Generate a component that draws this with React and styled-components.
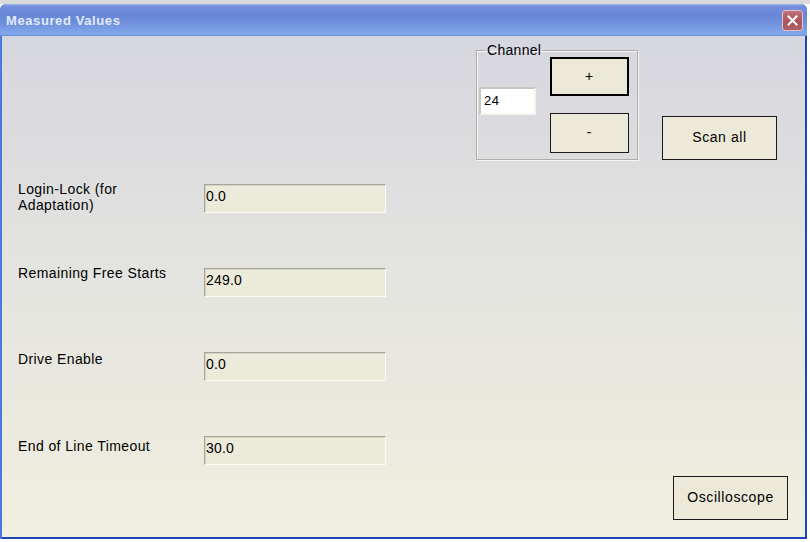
import React from "react";
import styled, { createGlobalStyle } from "styled-components";

const Global = createGlobalStyle`
  html, body { margin: 0; padding: 0; }
  body {
    width: 810px;
    height: 542px;
    overflow: hidden;
    background: linear-gradient(180deg, #dadada 0 4px, #ffffff 4px);
    font-family: "Liberation Sans", Arial, sans-serif;
  }
`;

const Desktop = styled.div`
  padding-top: 4px;
  width: 810px;
  height: 538px;
`;

const Window = styled.div`
  width: 807px;
  height: 535px;
  box-sizing: border-box;
  display: flex;
  flex-direction: column;
  border-radius: 6px 6px 0 0;
  overflow: hidden;
  background: #1d45b5;
`;

const TitleBar = styled.div`
  height: 32px;
  flex: none;
  display: flex;
  align-items: center;
  justify-content: space-between;
  padding: 0 4px 0 6px;
  background: linear-gradient(
    180deg,
    #9fb8ee 0,
    #7490dc 2px,
    #6886d8 10px,
    #6e8edb 18px,
    #7a9fe5 26px,
    #82a8ea 30px,
    #6c90da 32px
  );
`;

const Title = styled.span`
  font-family: "Liberation Sans", Arial, sans-serif;
  font-weight: bold;
  font-size: 13px;
  color: #e2eaf9;
  letter-spacing: 0.6px;
  padding-top: 1px;
`;

const CloseButton = styled.div`
  width: 21px;
  height: 21px;
  box-sizing: border-box;
  border-radius: 3px;
  border: 1px solid #e3c3c8;
  background: linear-gradient(180deg, #c07078 0, #a8545c 60%, #b0606a 100%);
  display: flex;
  align-items: center;
  justify-content: center;
`;

const Frame = styled.div`
  flex: 1;
  display: flex;
  padding: 0 2px 2px 2px;
  background: linear-gradient(90deg, #4a78dc 0 2px, #1d45b5 2px);
`;

const Client = styled.div`
  flex: 1;
  display: flex;
  flex-direction: column;
  background: linear-gradient(180deg, #d6d6de 0%, #e3e3e0 45%, #f1efdf 100%);
  font-family: "Liberation Sans", Arial, sans-serif;
  font-size: 14px;
  color: #000;
`;

const TopRow = styled.div`
  display: flex;
  align-items: flex-end;
  gap: 24px;
  padding: 6px 0 0 474px;
`;

const GroupBox = styled.fieldset`
  margin: 0;
  width: 162px;
  height: 118px;
  box-sizing: border-box;
  padding: 0 8px 6px 3px;
  border: 1px solid #aeada6;
  box-shadow: inset 1px 1px 0 #f6f6f6, 1px 1px 0 #f6f6f6;
  display: flex;
  align-items: flex-start;
  justify-content: space-between;
`;

const Legend = styled.legend`
  margin-left: 6px;
  padding: 0 1px;
  font-size: 14px;
  line-height: 16px;
  letter-spacing: 0.3px;
  color: #000;
`;

const ChannelInput = styled.div`
  width: 57px;
  height: 28px;
  box-sizing: border-box;
  margin-top: 29px;
  margin-left: -1px;
  background: #fff;
  border: 2px solid;
  border-color: #c9c8c0 #f4f4ee #f4f4ee #c9c8c0;
  padding: 4px 0 0 3px;
  font-size: 13px;
  line-height: 16px;
  letter-spacing: 0.6px;
`;

const ButtonColumn = styled.div`
  display: flex;
  flex-direction: column;
  gap: 17px;
  margin-top: -1px;
`;

const Button = styled.div`
  width: ${(p) => p.$w || 79}px;
  height: ${(p) => p.$h || 40}px;
  box-sizing: border-box;
  background: #ece9d8;
  border: ${(p) => (p.$default ? "2px solid #000" : "1px solid #1a1a1a")};
  display: flex;
  align-items: center;
  justify-content: center;
  font-size: 14px;
  letter-spacing: 0.6px;
  color: #000;
  padding-bottom: 2px;
`;

const Fields = styled.div`
  display: flex;
  flex-direction: column;
  gap: 55px;
  margin-top: 24px;
  padding-left: 16px;
`;

const FieldRow = styled.div`
  display: grid;
  grid-template-columns: 186px 182px;
  align-items: start;
`;

const Label = styled.div`
  margin-top: ${(p) => p.$dy}px;
  line-height: 16px;
  letter-spacing: 0.4px;
  white-space: ${(p) => (p.$wrap ? "normal" : "nowrap")};
  width: 125px;
`;

const ValueBox = styled.div`
  height: 29px;
  box-sizing: border-box;
  background: #ecead9;
  border: 1px solid;
  border-color: #a6a59c #fbfbf6 #fbfbf6 #a6a59c;
  box-shadow: inset 1px 1px 0 #d6d4c6;
  padding: 3px 0 0 1px;
  line-height: 16px;
  font-size: 14px;
  letter-spacing: 0.2px;
`;

const BottomRow = styled.div`
  display: flex;
  justify-content: flex-end;
  padding: 11px 17px 0 0;
`;

const rows = [
  { label: "Login-Lock (for Adaptation)", value: "0.0", dy: -3, wrap: true },
  { label: "Remaining Free Starts", value: "249.0", dy: -3 },
  { label: "Drive Enable", value: "0.0", dy: -1 },
  { label: "End of Line Timeout", value: "30.0", dy: 2 },
];

export default function App() {
  return (
    <>
      <Global />
      <Desktop>
        <Window>
          <TitleBar>
            <Title>Measured Values</Title>
            <CloseButton>
              <svg width="11" height="11" viewBox="0 0 11 11">
                <path
                  d="M1.5 1.5 L9.5 9.5 M9.5 1.5 L1.5 9.5"
                  stroke="#fff"
                  strokeWidth="2"
                  strokeLinecap="square"
                />
              </svg>
            </CloseButton>
          </TitleBar>
          <Frame>
            <Client>
              <TopRow>
                <GroupBox>
                  <Legend>Channel</Legend>
                  <ChannelInput>24</ChannelInput>
                  <ButtonColumn>
                    <Button $default $h={39}>+</Button>
                    <Button $h={40}>-</Button>
                  </ButtonColumn>
                </GroupBox>
                <Button $w={115} $h={44}>Scan all</Button>
              </TopRow>
              <Fields>
                {rows.map((r) => (
                  <FieldRow key={r.label}>
                    <Label $dy={r.dy} $wrap={r.wrap}>{r.label}</Label>
                    <ValueBox>{r.value}</ValueBox>
                  </FieldRow>
                ))}
              </Fields>
              <BottomRow>
                <Button $w={115} $h={44}>Oscilloscope</Button>
              </BottomRow>
            </Client>
          </Frame>
        </Window>
      </Desktop>
    </>
  );
}
